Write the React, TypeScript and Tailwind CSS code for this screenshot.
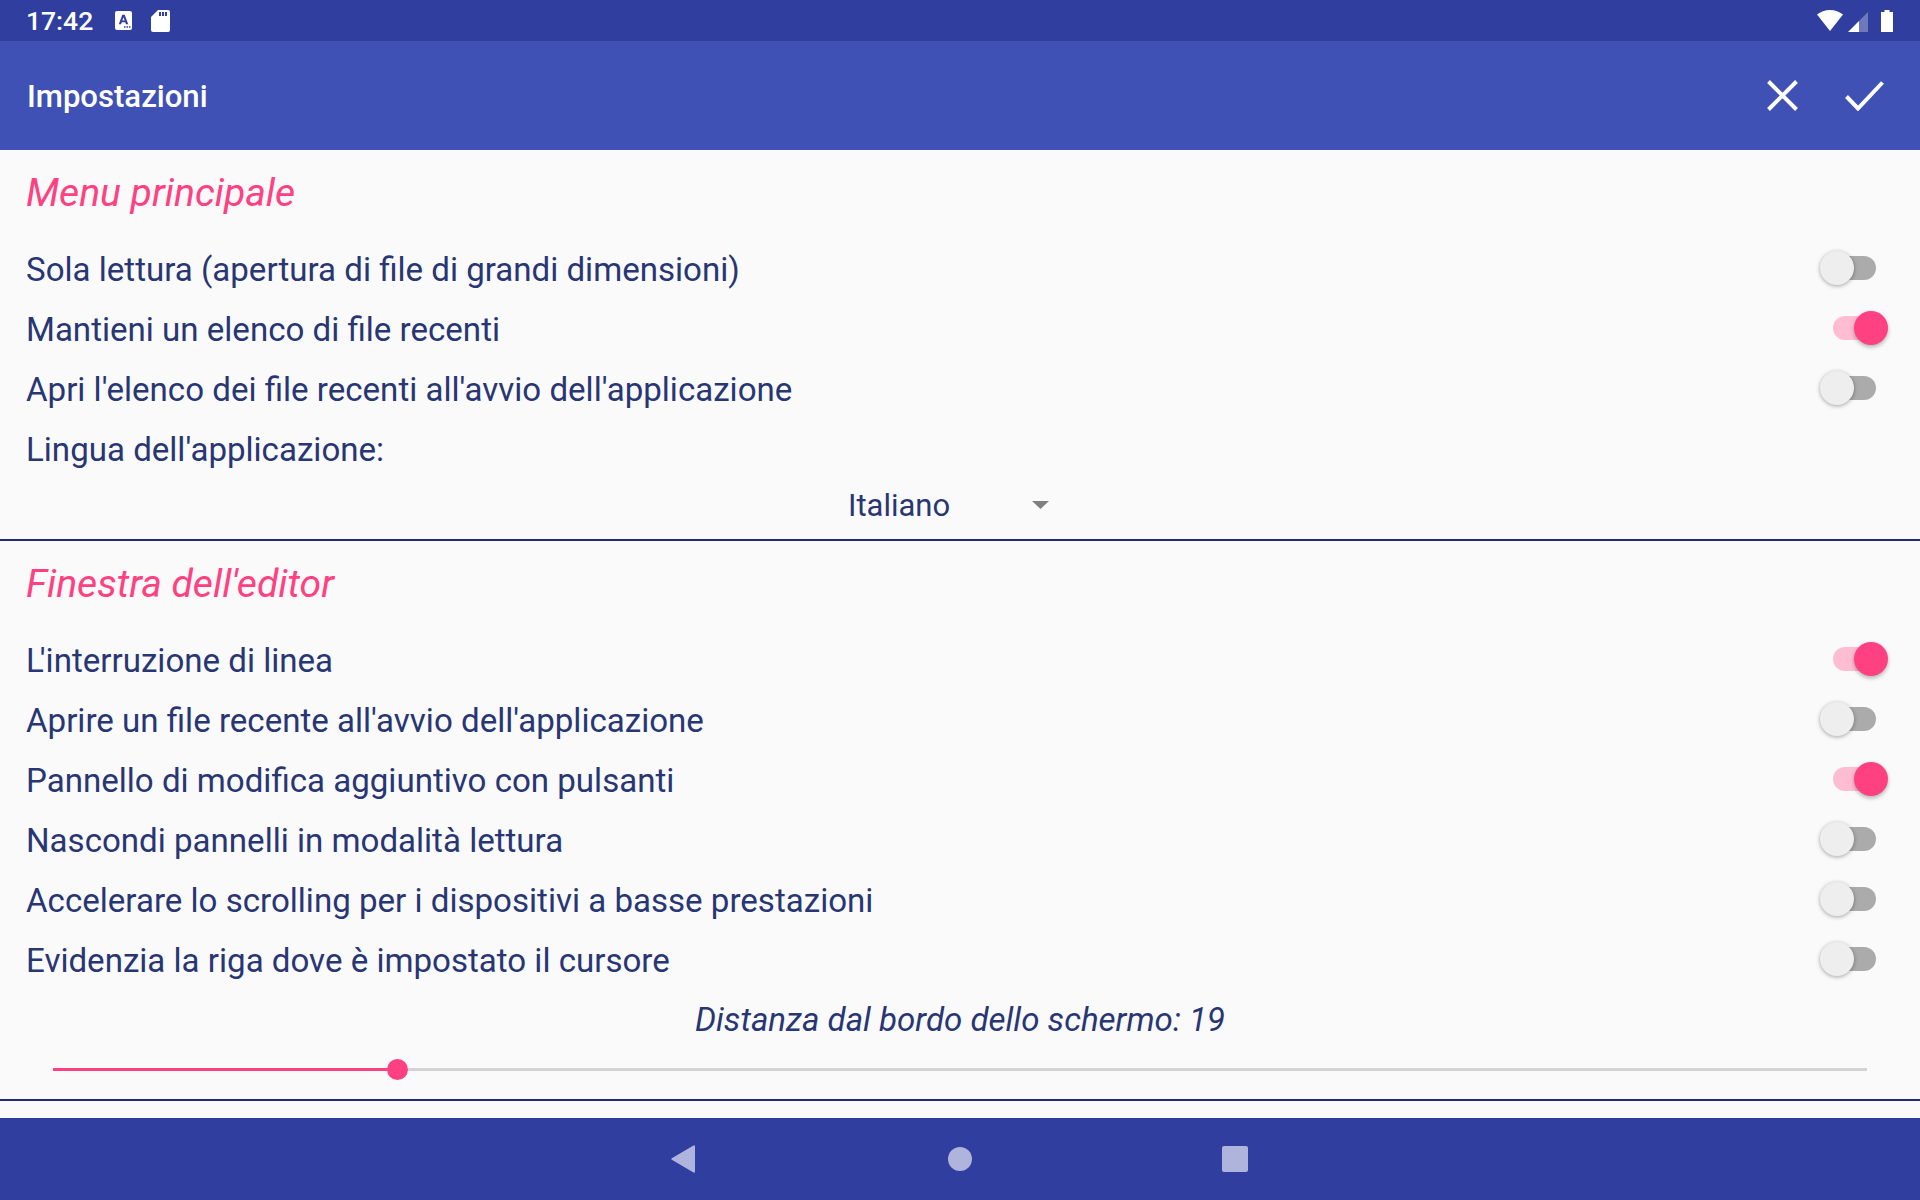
import type { ReactNode } from "react";

function Toggle({ on }: { on?: boolean }) {
  return (
    <div className="relative w-[69px] h-[35px] shrink-0">
      <div className={on ? "absolute left-[14px] top-[5px] w-[43px] h-[24px] rounded-full bg-[#ffbdd3]" : "absolute left-[14px] top-[5px] w-[43px] h-[24px] rounded-full bg-[#ababab]"} />
      <div
        className={
          on
            ? "absolute left-[35px] top-0 w-[34px] h-[34px] rounded-full bg-[#ff4081] shadow-[0_2px_4px_rgba(0,0,0,0.3)]"
            : "absolute left-[1px] top-0 w-[34px] h-[34px] rounded-full bg-[#eeeeee] shadow-[0_1px_4px_rgba(0,0,0,0.35)]"
        }
      />
    </div>
  );
}

function Row({ label, on, toggle = true }: { label: ReactNode; on?: boolean; toggle?: boolean }) {
  return (
    <div className="h-[60px] flex items-center justify-between pl-[26px] pr-[32px]">
      <span className="text-[33.08px] leading-[60px] text-[#283674] pt-[4px]">{label}</span>
      {toggle && <Toggle on={on} />}
    </div>
  );
}

export default function App() {
  return (
    <div className="w-[1920px] h-[1200px] flex flex-col bg-[#fafafa] overflow-hidden font-['Roboto',sans-serif]">
      <div className="h-[41px] shrink-0 bg-[#303f9f] flex items-center pl-[26px] pr-[27px] text-white">
        <span className="w-[89px] text-[26.5px] font-medium leading-none pt-[2px]">17:42</span>
        <svg width="17" height="19" viewBox="0 0 17 19">
          <rect x="0" y="0" width="17" height="19" rx="2" fill="#fff" />
          <path d="M3.800 13.200 7.300 3.800h2.400l3.500 9.400h-2.300l-.6-1.900H6.700l-.6 1.900zM7.300 9.600h2.400L8.500 6.200z" fill="#303f9f" />
          <rect x="9" y="15.200" width="1.500" height="1.500" fill="#303f9f" />
          <rect x="11.500" y="15.200" width="1.500" height="1.500" fill="#303f9f" />
          <rect x="14" y="15.200" width="1.500" height="1.500" fill="#303f9f" />
        </svg>
        <svg className="ml-[19px]" width="19" height="22" viewBox="0 0 19 22">
          <path d="M7 0h10a2 2 0 0 1 2 2v18a2 2 0 0 1-2 2H2a2 2 0 0 1-2-2V7z" fill="#fff" />
          <rect x="8" y="2" width="2" height="4" fill="#303f9f" />
          <rect x="11" y="2" width="2" height="4" fill="#303f9f" />
          <rect x="14" y="2" width="2" height="4" fill="#303f9f" />
        </svg>
        <div className="ml-auto flex items-center">
          <svg width="26" height="21" viewBox="0 0 26 21">
            <path d="M13 21 0 4.500C3.500 1.800 8 0 13 0s9.500 1.800 13 4.500z" fill="#fff" />
          </svg>
          <svg className="ml-[5px] translate-y-[1px]" width="20" height="20" viewBox="0 0 20 20">
            <path d="M0 20 11 9v11z" fill="#fff" />
            <path d="M11 9 20 0v20h-9z" fill="#fff" fillOpacity="0.3" />
          </svg>
          <svg className="ml-[13px]" width="12" height="22" viewBox="0 0 12 22">
            <path d="M3.500 0h5v2H12v20H0V2h3.500z" fill="#fff" />
          </svg>
        </div>
      </div>
      <div className="h-[109px] shrink-0 bg-[#3f51b5] flex items-center pl-[27px] text-white">
        <span className="text-[31.1px] font-medium pt-[3px]">Impostazioni</span>
        <svg className="ml-auto" width="31" height="31" viewBox="0 0 31 31">
          <path d="M1.500 1.500 29.500 29.500M29.500 1.500 1.500 29.500" stroke="#fff" strokeWidth="4" fill="none" />
        </svg>
        <svg className="ml-[47px] mr-[36px]" width="39" height="30" viewBox="0 0 39 30">
          <path d="M1.500 15.500 13 27.500 37.500 1.500" stroke="#fff" strokeWidth="4" fill="none" />
        </svg>
      </div>

      <div className="flex-1 min-h-0">
        <section className="h-[391px] border-b-2 border-[#1f2d6e]">
          <div className="h-[88px] pl-[26px] pt-[18px] text-[39.1px] leading-[50px] italic text-[#ff4081]">Menu principale</div>
          <Row label="Sola lettura (apertura di file di grandi dimensioni)" />
          <Row label="Mantieni un elenco di file recenti" on />
          <Row label="Apri l'elenco dei file recenti all'avvio dell'applicazione" />
          <Row label="Lingua dell'applicazione:" toggle={false} />
          <div className="h-[52px] flex items-center pl-[848px] pt-[4px] text-[31px] text-[#283674]">
            <span>Italiano</span>
            <svg className="ml-[82px] -translate-y-[1px]" width="17" height="8" viewBox="0 0 17 8"><path d="M0 0h17L8.500 8z" fill="#808080" /></svg>
          </div>
        </section>
        <section className="h-[560px] border-b-2 border-[#1f2d6e]">
          <div className="h-[88px] pl-[26px] pt-[18px] text-[39.1px] leading-[50px] italic text-[#ff4081]">Finestra dell'editor</div>
          <Row label={<><span className="tracking-[-4px]">L</span>'interruzione di linea</>} on />
          <Row label="Aprire un file recente all'avvio dell'applicazione" />
          <Row label="Pannello di modifica aggiuntivo con pulsanti" on />
          <Row label="Nascondi pannelli in modalità lettura" />
          <Row label="Accelerare lo scrolling per i dispositivi a basse prestazioni" />
          <Row label="Evidenzia la riga dove è impostato il cursore" />
          <div className="h-[60px] flex items-center justify-center pt-[2px] text-[33.08px] italic text-[#283674]">Distanza dal bordo dello schermo: 19</div>
          <div className="relative h-[30px] mx-[53px]">
            <div className="absolute left-0 right-0 top-[19px] h-[3px] bg-[#d3d3d3]" />
            <div className="absolute left-0 top-[19px] h-[3px] w-[340px] bg-[#ff4081]" />
            <div className="absolute left-[334px] top-[10px] w-[21px] h-[21px] rounded-full bg-[#ff4081]" />
          </div>
        </section>
      </div>

      <div className="h-[82px] shrink-0 bg-[#303f9f] relative">
        <svg className="absolute left-[671px] top-[27px]" width="24" height="28" viewBox="0 0 24 28">
          <path d="M22.500 0.500 0.800 13.200a1 1 0 0 0 0 1.600L22.500 27.500a1 1 0 0 0 1.500-1V1.500a1 1 0 0 0-1.500-1z" fill="#aeb4dc" />
        </svg>
        <div className="absolute left-[948px] top-[29px] w-[24px] h-[24px] rounded-full bg-[#aeb4dc]" />
        <div className="absolute left-[1222px] top-[28px] w-[26px] h-[26px] rounded-[2px] bg-[#aeb4dc]" />
      </div>
    </div>
  );
}
